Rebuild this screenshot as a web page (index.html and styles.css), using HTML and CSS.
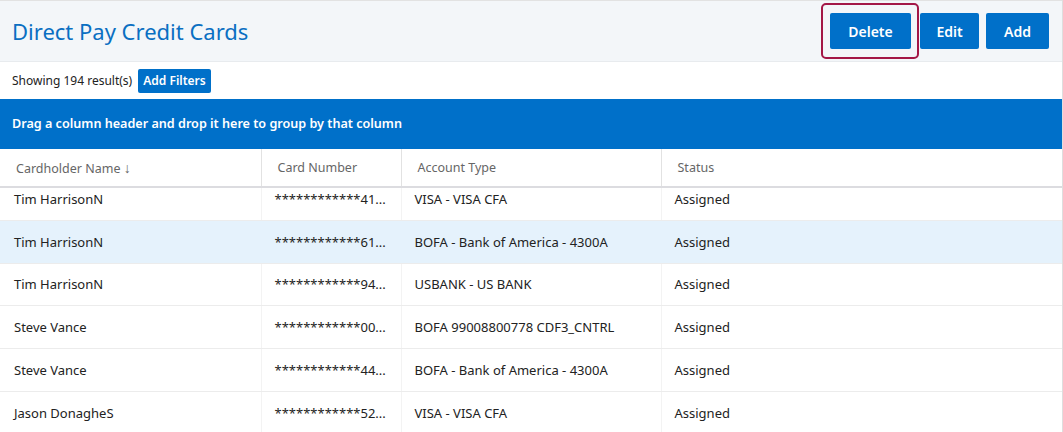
FILE: index.html
```html
<!DOCTYPE html>
<html lang="en">
<head>
<meta charset="UTF-8">
<meta name="viewport" content="width=device-width, initial-scale=1.0">
<title>Direct Pay Credit Cards</title>
<link rel="stylesheet" href="styles.css">
</head>
<body>
<div class="page">
    <div class="page-header">
        <h2>Direct Pay Credit Cards</h2>
        <div class="actions">
            <span class="focus-ring"><button class="btn btn-lg">Delete</button></span>
            <button class="btn btn-lg">Edit</button>
            <button class="btn btn-lg">Add</button>
        </div>
    </div>
    <div class="toolbar">
        <span>Showing 194 result(s)</span>
        <button class="btn btn-sm">Add Filters</button>
    </div>
    <div class="group-panel">Drag a column header and drop it here to group by that column</div>
    <table class="grid-head">
        <colgroup>
            <col class="c-name"><col class="c-card"><col class="c-type"><col>
        </colgroup>
        <thead>
            <tr>
                <th>Cardholder Name <span class="sort">&#8595;</span></th>
                <th>Card Number</th>
                <th>Account Type</th>
                <th>Status</th>
            </tr>
        </thead>
    </table>
    <div class="grid-body">
        <table class="grid-rows">
            <colgroup>
                <col class="c-name"><col class="c-card"><col class="c-type"><col>
            </colgroup>
            <tbody>
                <tr>
                    <td>Tim HarrisonN</td>
                    <td>************41...</td>
                    <td>VISA - VISA CFA</td>
                    <td>Assigned</td>
                </tr>
                <tr class="selected">
                    <td>Tim HarrisonN</td>
                    <td>************61...</td>
                    <td>BOFA - Bank of America - 4300A</td>
                    <td>Assigned</td>
                </tr>
                <tr>
                    <td>Tim HarrisonN</td>
                    <td>************94...</td>
                    <td>USBANK - US BANK</td>
                    <td>Assigned</td>
                </tr>
                <tr>
                    <td>Steve Vance</td>
                    <td>************00...</td>
                    <td>BOFA 99008800778 CDF3_CNTRL</td>
                    <td>Assigned</td>
                </tr>
                <tr>
                    <td>Steve Vance</td>
                    <td>************44...</td>
                    <td>BOFA - Bank of America - 4300A</td>
                    <td>Assigned</td>
                </tr>
                <tr>
                    <td>Jason DonagheS</td>
                    <td>************52...</td>
                    <td>VISA - VISA CFA</td>
                    <td>Assigned</td>
                </tr>
            </tbody>
        </table>
    </div>
</div>
</body>
</html>
```

FILE: styles.css
```css
body {
    font-family: "Noto Sans", "Open Sans", sans-serif;
    margin: 0;
    padding: 0;
    background-color: #fff;
    color: #222;
    overflow: hidden;
}
.page {
    height: 432px;
    border-right: 1px solid #dedede;
    box-sizing: border-box;
    overflow: hidden;
}
.page-header {
    display: flex;
    align-items: center;
    justify-content: space-between;
    height: 60px;
    padding: 0 13px 0 12px;
    background-color: #f3f6f9;
    border-top: 1px solid #e2e2e2;
    border-bottom: 1px solid #e8ebee;
}
h2 {
    margin: 0;
    font-size: 22px;
    font-weight: normal;
    color: #0a6fc2;
}
.actions {
    display: flex;
    align-items: center;
    gap: 7px;
}
.btn {
    font-family: inherit;
    background-color: #0070c9;
    color: #fff;
    border: none;
    border-radius: 2px;
    cursor: pointer;
}
.btn-lg {
    height: 36px;
    padding: 0 16px;
    font-size: 14px;
    font-weight: 600;
}
.actions .btn-lg:nth-child(2) {
    min-width: 59px;
}
.actions .btn-lg:nth-child(3) {
    min-width: 63px;
}
.focus-ring {
    display: flex;
    padding: 8px 6px 8px 7px;
    margin-right: -6px;
    border: 2px solid #a31746;
    border-radius: 5px;
}
.focus-ring .btn {
    width: 81px;
}
.toolbar {
    display: flex;
    align-items: center;
    gap: 6px;
    height: 37px;
    padding-left: 12px;
    font-size: 12px;
}
.btn-sm {
    height: 24px;
    padding: 0 5px;
    font-size: 12px;
    font-weight: 600;
}
.group-panel {
    height: 50px;
    line-height: 50px;
    padding-left: 12px;
    background-color: #0070c9;
    color: #fff;
    font-size: 12.6px;
    font-weight: 600;
}
table {
    width: 100%;
    border-collapse: collapse;
    table-layout: fixed;
}
.c-name {
    width: 261px;
}
.c-card {
    width: 140px;
}
.c-type {
    width: 260px;
}
th {
    height: 37px;
    padding: 0 0 0 16px;
    text-align: left;
    font-size: 12.5px;
    font-weight: normal;
    color: #666;
    border-bottom: 2px solid #dcdce0;
    border-left: 1px solid #e2e2e2;
}
th:first-child {
    border-left: none;
}
.sort {
    font-size: 14px;
}
.grid-body {
    overflow: hidden;
}
.grid-rows {
    margin-top: -10px;
}
td {
    height: 41.75px;
    padding: 0 0 0 13px;
    font-size: 13px;
    white-space: nowrap;
    border-bottom: 1px solid #ececec;
    border-left: 1px solid #f3f3f3;
}
td:first-child {
    padding-left: 14px;
    border-left: none;
}
.selected td {
    background-color: #e5f2fc;
    border-left-color: #e5f2fc;
}
```
